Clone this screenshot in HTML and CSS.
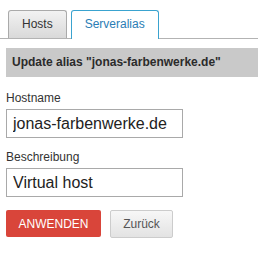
FILE: index.html
```html
<!DOCTYPE html>
<html>
<head>
	<title>Serveralias</title>
	<link rel="stylesheet" href="styles.css">
</head>
<body>
	<ul class="tabs">
		<li class="tab">Hosts</li>
		<li class="tab active">Serveralias</li>
	</ul>
	<div class="panel">
		<h4 class="panelTitle">Update alias "jonas-farbenwerke.de"</h4>
		<form class="aliasForm">
			<label for="hostname">Hostname</label>
			<input type="text" id="hostname" value="jonas-farbenwerke.de" />
			<label for="description">Beschreibung</label>
			<input type="text" id="description" value="Virtual host" />
			<div class="actions">
				<button type="button" class="btnApply">ANWENDEN</button>
				<button type="button" class="btnBack">Zurück</button>
			</div>
		</form>
	</div>
</body>
</html>
```
FILE: styles.css
```css
body {
	margin: 0px;
	padding: 0px;
	background-color: white;
	font-family: "Liberation Sans", Arial, sans-serif;
	color: #333333;
}

.tabs {
	display: flex;
	gap: 4px;
	margin: 0;
	padding: 10px 0 0 8px;
	list-style: none;
	border-bottom: 1px solid #b3b3b3;
}
.tab {
	height: 27px;
	line-height: 27px;
	padding: 0 13px;
	font-size: 12px;
	color: #333333;
	border: 1px solid #aaaaaa;
	border-bottom: none;
	border-radius: 3px 3px 0 0;
	background: linear-gradient(#f2f2f2, #d9d9d9);
}
.tab.active {
	margin-bottom: -1px;
	height: 28px;
	color: #2a7db5;
	background: white;
	border-color: #3aa3cf;
}

.panel {
	padding: 9px 0 0 6px;
}
.panelTitle {
	margin: 0;
	height: 29px;
	line-height: 29px;
	padding-left: 6px;
	background-color: #c9c9c9;
	font-size: 12px;
	font-weight: bold;
	color: #2b2b2b;
}

.aliasForm {
	display: flex;
	flex-direction: column;
	align-items: flex-start;
	padding-top: 14px;
}
.aliasForm label {
	font-size: 12px;
	line-height: 15px;
	margin-bottom: 3px;
}
.aliasForm input {
	box-sizing: border-box;
	width: 177px;
	height: 29px;
	margin: 0 0 12px 0;
	padding: 0 6px;
	border: 1px solid #a9a9a9;
	font-family: "Liberation Sans", Arial, sans-serif;
	font-size: 16px;
	color: #222222;
}

.actions {
	display: flex;
	gap: 9px;
	padding-top: 1px;
}
.btnApply {
	height: 27px;
	width: 95px;
	border: none;
	border-radius: 2px;
	background-color: #d9453a;
	color: white;
	font-family: "Liberation Sans", Arial, sans-serif;
	font-size: 12px;
}
.btnBack {
	height: 28px;
	width: 63px;
	border: 1px solid #cccccc;
	border-radius: 2px;
	background: linear-gradient(#f7f7f7, #e3e3e3);
	color: #555555;
	font-family: "Liberation Sans", Arial, sans-serif;
	font-size: 12px;
}
```
